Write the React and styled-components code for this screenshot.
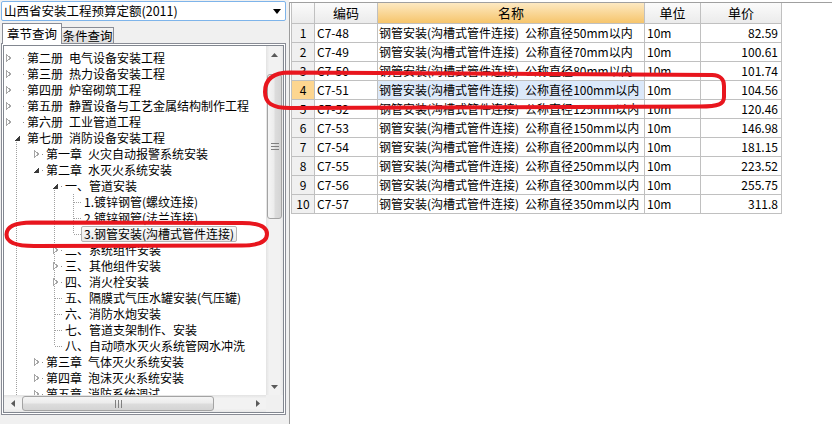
import React from 'react';
import styled, { createGlobalStyle } from 'styled-components';

const GlobalStyle = createGlobalStyle`
  * { box-sizing: border-box; }
  html, body { margin: 0; padding: 0; background: #fff; }
  body {
    font-family: "Noto Sans CJK SC", "Noto Sans", sans-serif;
    font-size: 12px;
    color: #000;
  }
`;

const Window = styled.div`
  width: 832px;
  height: 424px;
  display: flex;
  position: relative;
  overflow: hidden;
  background: #fff;
`;

const LeftPanel = styled.div`
  width: 287px;
  flex: none;
  background: #f0f0f0;
  display: flex;
  flex-direction: column;
`;

const Splitter = styled.div`
  width: 2px;
  flex: none;
  background: #f0f0f0;
`;

const RightPanel = styled.div`
  flex: 1;
  margin-top: 2px;
  border-top: 1px solid #a0a0a0;
  border-left: 1px solid #9c9c9c;
  padding-left: 1px;
  background: #fff;
`;

const Combo = styled.div`
  margin: 1px 1px 0 1px;
  height: 20px;
  border: 1px solid #7eb4ea;
  border-radius: 2px;
  background: #fff;
  display: flex;
  align-items: center;
  justify-content: space-between;
  padding: 0 4px 0 2px;
  line-height: 18px;
  font-size: 12.5px;
`;

const TabBar = styled.div`
  height: 22px;
  padding-left: 2px;
  display: flex;
  align-items: flex-end;
`;

const Tab = styled.div`
  position: relative;
  z-index: ${(p) => (p.$active ? 1 : 0)};
  width: ${(p) => (p.$active ? '60px' : '52px')};
  height: ${(p) => (p.$active ? '21px' : '16px')};
  margin-bottom: ${(p) => (p.$active ? '-1px' : '0')};
  border: 1px solid #898c95;
  border-bottom: none;
  border-left: ${(p) => (p.$active ? '1px solid #898c95' : 'none')};
  background: ${(p) => (p.$active ? '#fff' : 'linear-gradient(#f3f3f3, #dedede)')};
  text-align: center;
  font-size: 12.5px;
  line-height: ${(p) => (p.$active ? '19px' : '15px')};
`;

const TabPanel = styled.div`
  margin: 0 1px;
  height: 372px;
  border: 1px solid #898c95;
  background: #fff;
  padding: 1px;
`;

const TreeBox = styled.div`
  height: 100%;
  border: 1px solid #828790;
  display: grid;
  grid-template-columns: 1fr 17px;
  grid-template-rows: 1fr 17px;
  background: #fff;
`;

const TreeArea = styled.div`
  overflow: hidden;
  padding-top: 4px;
`;

const TreeRow = styled.div`
  height: 16px;
  display: flex;
  align-items: center;
  white-space: nowrap;
`;

const Label = styled.span`
  height: 16px;
  line-height: 14px;
  padding: 0 2px;
  border: 1px solid ${(p) => (p.$sel ? '#b4b4b4' : 'transparent')};
  border-radius: 2px;
  background: ${(p) => (p.$sel ? 'linear-gradient(#fbfbfb, #e9e9e9)' : 'transparent')};
`;

const VScroll = styled.div`
  display: flex;
  flex-direction: column;
  background: linear-gradient(to right, #e3e3e3, #f2f2f2 20%, #f2f2f2 80%, #e8e8e8);
`;

const HScroll = styled.div`
  display: flex;
  background: linear-gradient(#e3e3e3, #f2f2f2 20%, #f2f2f2 80%, #e8e8e8);
`;

const Corner = styled.div`
  background: #f0f0f0;
`;

const ArrowBtn = styled.div`
  width: 17px;
  height: 17px;
  flex: none;
  display: flex;
  align-items: center;
  justify-content: center;
`;

const Track = styled.div`
  flex: 1;
  position: relative;
`;

const VThumb = styled.div`
  margin: 0 1px;
  border: 1px solid #a3a3a3;
  border-radius: 3px;
  background: linear-gradient(to right, #f5f5f5, #ececec 45%, #dcdcdc 55%, #d4d4d4);
  display: flex;
  align-items: center;
  justify-content: center;
`;

const HThumb = styled.div`
  margin: 1px 0;
  border: 1px solid #a3a3a3;
  border-radius: 3px;
  background: linear-gradient(#f5f5f5, #ececec 45%, #dcdcdc 55%, #d4d4d4);
  display: flex;
  align-items: center;
  justify-content: center;
`;

const Grid = styled.div`
  display: grid;
  grid-template-columns: 23px 63px 267px 56px 81px;
  grid-template-rows: 21px;
  grid-auto-rows: 19px;
  width: 491px;
  border-left: 1px solid #c0c0c0;
`;

const HeadCell = styled.div`
  border-right: 1px solid #c0c0c0;
  border-bottom: 1px solid #c0c0c0;
  background: ${(p) =>
    p.$accent ? 'linear-gradient(#fde9c2, #f6c56c)' : 'linear-gradient(#fbfbfb, #ebebeb)'};
  text-align: center;
  line-height: 20px;
  font-size: 13px;
`;

const Cell = styled.div`
  border-right: 1px solid #c0c0c0;
  border-bottom: 1px solid #c0c0c0;
  line-height: 18px;
  white-space: nowrap;
  overflow: hidden;
  text-align: ${(p) => p.$align || 'left'};
  padding: 0 ${(p) => (p.$align === 'right' ? '3px' : '0')} 0 ${(p) => p.$pl || '2px'};
  background: ${(p) => (p.$active ? '#dce9fa' : '#fff')};
`;

const NumCell = styled(Cell)`
  text-align: center;
  padding: 0;
  background: ${(p) => (p.$active ? '#fdd690' : '#f0f0f0')};
`;

const Marks = styled.svg`
  position: absolute;
  left: 0;
  top: 0;
  pointer-events: none;
`;

const treeRows = [
  { l: 0, s: 'c', t: '第二册\u2002电气设备安装工程' },
  { l: 0, s: 'c', t: '第三册\u2002热力设备安装工程' },
  { l: 0, s: 'c', t: '第四册\u2002炉窑砌筑工程' },
  { l: 0, s: 'c', t: '第五册\u2002静置设备与工艺金属结构制作工程' },
  { l: 0, s: 'c', t: '第六册\u2002工业管道工程' },
  { l: 0, s: 'e', t: '第七册\u2002消防设备安装工程' },
  { l: 1, s: 'c', t: '第一章\u2002火灾自动报警系统安装' },
  { l: 1, s: 'e', t: '第二章\u2002水灭火系统安装' },
  { l: 2, s: 'e', t: '一、管道安装' },
  { l: 3, s: 'leaf', t: '1.镀锌钢管(螺纹连接)' },
  { l: 3, s: 'leaf', t: '2.镀锌钢管(法兰连接)' },
  { l: 3, s: 'leaf', t: '3.钢管安装(沟槽式管件连接)', sel: true },
  { l: 2, s: 'c', t: '二、系统组件安装' },
  { l: 2, s: 'c', t: '三、其他组件安装' },
  { l: 2, s: 'c', t: '四、消火栓安装' },
  { l: 2, s: 'leaf', t: '五、隔膜式气压水罐安装(气压罐)' },
  { l: 2, s: 'leaf', t: '六、消防水炮安装' },
  { l: 2, s: 'leaf', t: '七、管道支架制作、安装' },
  { l: 2, s: 'leaf', t: '八、自动喷水灭火系统管网水冲洗' },
  { l: 1, s: 'c', t: '第三章\u2002气体灭火系统安装' },
  { l: 1, s: 'c', t: '第四章\u2002泡沫灭火系统安装' },
  { l: 1, s: 'c', t: '第五章\u2002消防系统调试' },
];

// vertical guide segments per row: [x, y1, y2]
function guides(i) {
  const g = [];
  if (i === 5) g.push([12.5, 12, 16]);
  if (i > 5) g.push([12.5, 0, 16]);
  if (i === 8) g.push([50.5, 12, 16]);
  if (i > 8 && i < 18) g.push([50.5, 0, 16]);
  if (i === 18) g.push([50.5, 0, 8]);
  if (i === 9 || i === 10) g.push([69.5, 0, 16]);
  if (i === 11) g.push([69.5, 0, 8]);
  return g;
}

function Gutter({ row, index }) {
  const { l, s } = row;
  const w = 20 + 19 * l;
  const lines = guides(index);
  let tri = null;
  let dotX = null;
  let hline = null;
  if (s === 'c') {
    const x = l === 0 ? 2 : 11 + 19 * l;
    tri = <polygon points={`${x + 0.5},4.5 ${x + 4.5},8 ${x + 0.5},11.5`} fill="#fff" stroke="#a6a6a6" />;
    dotX = 19 + 19 * l;
  } else if (s === 'e') {
    const x = 10 + 19 * l;
    tri = <polygon points={`${x + 5.5},5.5 ${x + 5.5},11 ${x},11`} fill="#3a3a3a" />;
    if (l > 0) dotX = 19 + 19 * l;
  } else {
    const from = l === 3 ? 69.5 : 50.5;
    hline = <line x1={from} y1="8.5" x2={w} y2="8.5" stroke="#a0a0a0" strokeDasharray="1 1" />;
  }
  return (
    <svg width={w} height="16" style={{ flex: 'none' }} shapeRendering="crispEdges">
      {lines.map(([x, a, b], k) => (
        <line key={k} x1={x} y1={a} x2={x} y2={b} stroke="#a0a0a0" strokeDasharray="1 1" />
      ))}
      {hline}
      {dotX !== null && <rect x={dotX} y="8" width="1" height="1" fill="#909090" />}
      {tri}
    </svg>
  );
}

const tableRows = [
  ['C7-48', '50', '82.59'],
  ['C7-49', '70', '100.61'],
  ['C7-50', '80', '101.74'],
  ['C7-51', '100', '104.56'],
  ['C7-52', '125', '120.46'],
  ['C7-53', '150', '146.98'],
  ['C7-54', '200', '181.15'],
  ['C7-55', '250', '223.52'],
  ['C7-56', '300', '255.75'],
  ['C7-57', '350', '311.8'],
];

const Arrow = ({ dir }) => {
  const pts = {
    up: '0,4 7,4 3.5,0',
    down: '0,0 7,0 3.5,4',
    left: '4,0 4,7 0,3.5',
    right: '0,0 0,7 4,3.5',
  }[dir];
  const vertical = dir === 'up' || dir === 'down';
  return (
    <svg width={vertical ? 7 : 4} height={vertical ? 4 : 7}>
      <polygon points={pts} fill="#5a5a5a" />
    </svg>
  );
};

const Grip = ({ horizontal }) => (
  <svg width={horizontal ? 7 : 8} height={horizontal ? 8 : 7} shapeRendering="crispEdges">
    {[0, 3, 6].map((o) =>
      horizontal ? (
        <rect key={o} x={o} y="0" width="1" height="8" fill="#808080" />
      ) : (
        <rect key={o} x="0" y={o} width="8" height="1" fill="#808080" />
      )
    )}
  </svg>
);

export default function App() {
  return (
    <Window>
      <GlobalStyle />
      <LeftPanel>
        <Combo>
          <span>山西省安装工程预算定额(2011)</span>
          <svg width="8" height="5">
            <polygon points="0,0 8,0 4,5" fill="#000" />
          </svg>
        </Combo>
        <TabBar>
          <Tab $active>章节查询</Tab>
          <Tab>条件查询</Tab>
        </TabBar>
        <TabPanel>
          <TreeBox>
            <TreeArea>
              {treeRows.map((row, i) => (
                <TreeRow key={i}>
                  <Gutter row={row} index={i} />
                  <Label $sel={row.sel}>{row.t}</Label>
                </TreeRow>
              ))}
            </TreeArea>
            <VScroll>
              <ArrowBtn>
                <Arrow dir="up" />
              </ArrowBtn>
              <Track>
                <VThumb style={{ marginTop: 11, height: 145 }}>
                  <Grip />
                </VThumb>
              </Track>
              <ArrowBtn>
                <Arrow dir="down" />
              </ArrowBtn>
            </VScroll>
            <HScroll>
              <ArrowBtn>
                <Arrow dir="left" />
              </ArrowBtn>
              <Track>
                <HThumb style={{ marginLeft: 1, width: 192, height: 15 }}>
                  <Grip horizontal />
                </HThumb>
              </Track>
              <ArrowBtn>
                <Arrow dir="right" />
              </ArrowBtn>
            </HScroll>
            <Corner />
          </TreeBox>
        </TabPanel>
      </LeftPanel>
      <Splitter />
      <RightPanel>
        <Grid>
          <HeadCell />
          <HeadCell>编码</HeadCell>
          <HeadCell $accent>名称</HeadCell>
          <HeadCell>单位</HeadCell>
          <HeadCell>单价</HeadCell>
          {tableRows.map(([code, dia, price], i) => {
            const active = i === 3;
            return (
              <React.Fragment key={code}>
                <NumCell $active={active}>{i + 1}</NumCell>
                <Cell>{code}</Cell>
                <Cell $active={active} $pl="1px">
                  钢管安装(沟槽式管件连接)&ensp;公称直径{dia}mm以内
                </Cell>
                <Cell>10m</Cell>
                <Cell $align="right">{price}</Cell>
              </React.Fragment>
            );
          })}
        </Grid>
      </RightPanel>
      <Marks width="832" height="424" viewBox="0 0 832 424">
        <path
          d="M32 222.5 C14 222.5 6.5 227 6.5 234.5 C6.5 242 14 246 34 246 L242 245.5 C261 245.5 267 241 267 234 C267 227 260 223 242 223 Z"
          fill="none"
          stroke="#e8161e"
          strokeWidth="4"
        />
        <path
          d="M290 72.5 L712 75 C721 75.5 724 79 724 86 L724 97 C724 104 719 106.5 700 106.5 L290 108 C272 108 265 103 265 92 C265 80 272 72.5 290 72.5 Z"
          fill="none"
          stroke="#e8161e"
          strokeWidth="4"
        />
      </Marks>
    </Window>
  );
}
